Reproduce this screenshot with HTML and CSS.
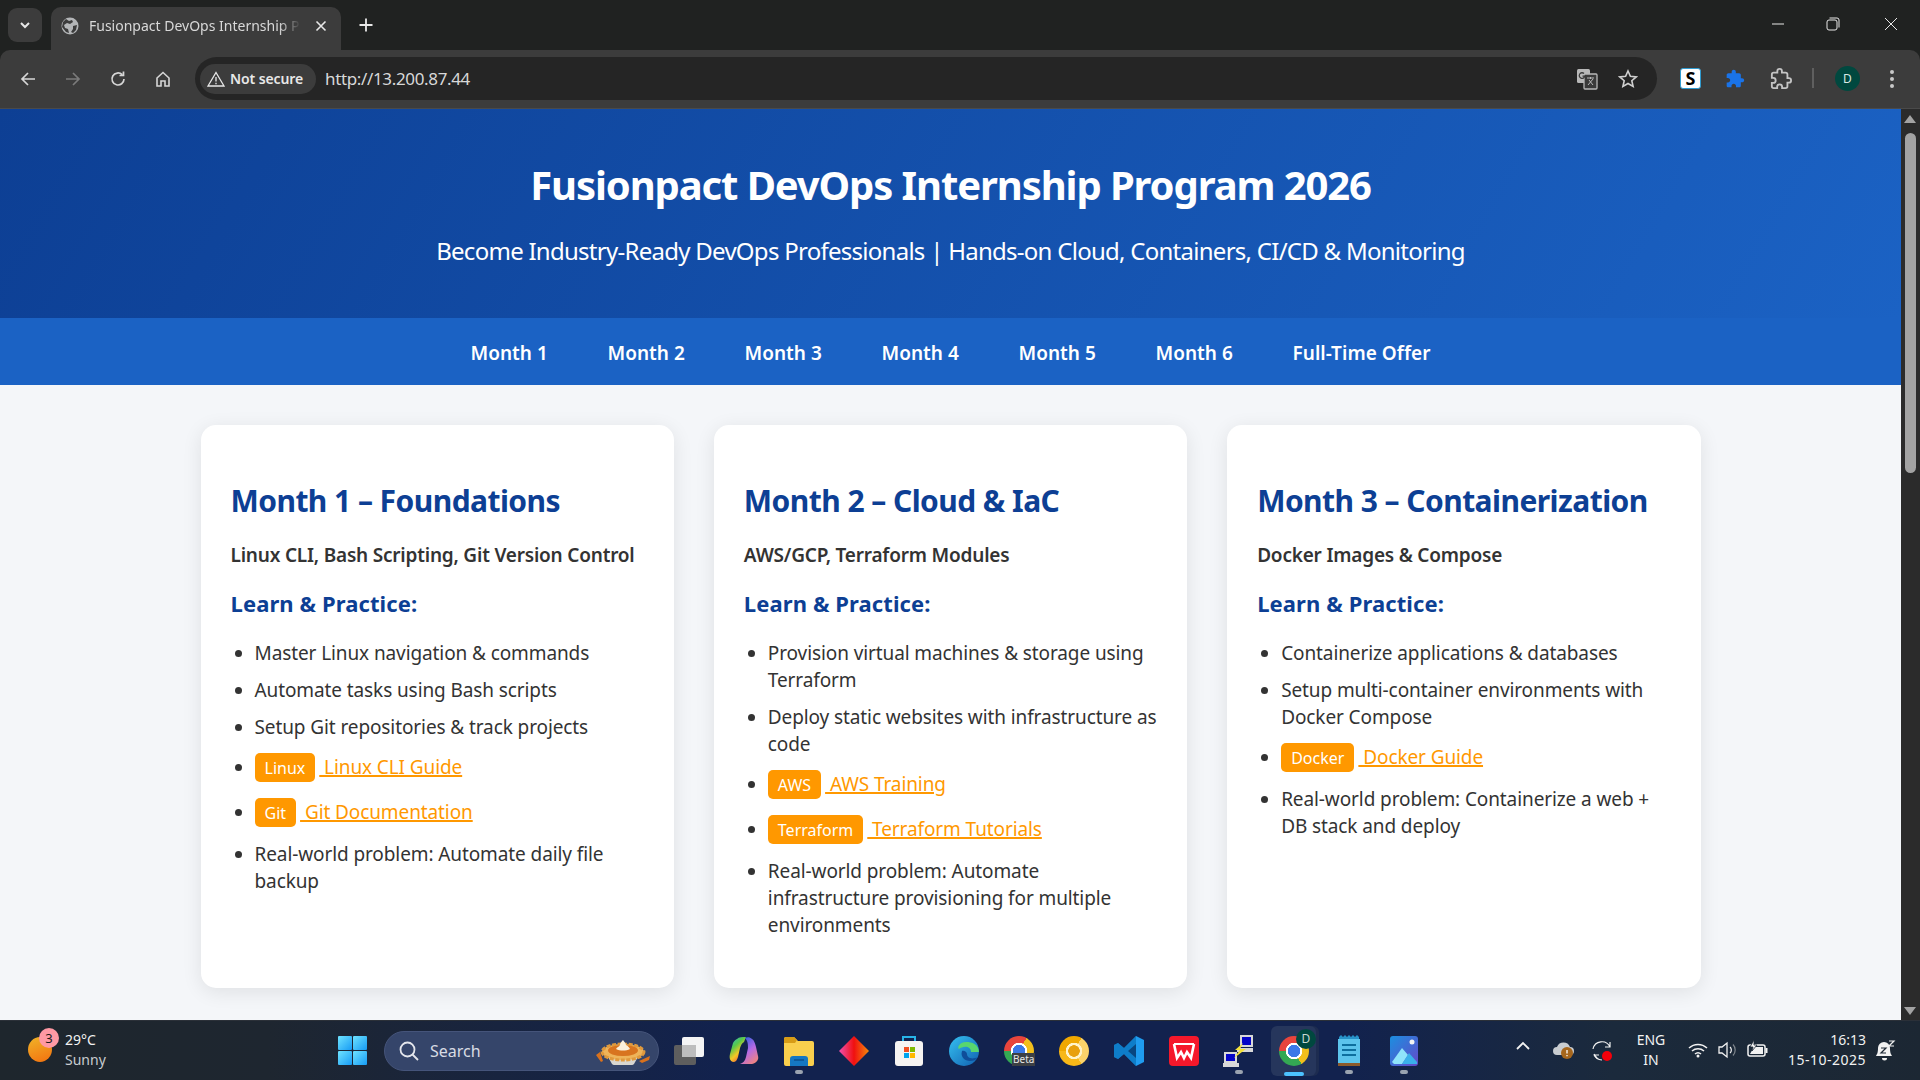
FILE: index.html
```html
<!DOCTYPE html>
<html lang="en">
<head>
    <meta charset="UTF-8">
    <meta name="viewport" content="width=device-width, initial-scale=1.0">
    <title>Fusionpact DevOps Internship Program 2026</title>
    <link rel="stylesheet" href="styles.css">
</head>
<body>
    <!-- Browser tab strip -->
    <div class="tabstrip">
        <div class="tab-search">
            <svg width="12" height="12" viewBox="0 0 12 12"><path d="M2 4l4 4 4-4" fill="none" stroke="#e8e8e8" stroke-width="2"/></svg>
        </div>
        <div class="tab">
            <svg class="tab-globe" width="18" height="18" viewBox="0 0 18 18"><circle cx="9" cy="9" r="8.500" fill="#b4b6b8"/><path d="M5 2l3 2 3-1 1 2-3 2-3-1-3 2 1 3 3 1 1 4-3-1-4-5 1-5zM12 9l4-1-1 5-3 3-2-1 2-3z" fill="#3c3c3c"/></svg>
            <span class="tab-title">Fusionpact DevOps Internship P</span>
            <svg width="12" height="12" viewBox="0 0 12 12"><path d="M1.500 1.500l9 9M10.500 1.500l-9 9" stroke="#e8e8e8" stroke-width="1.600"/></svg>
        </div>
        <svg class="tab-new" width="16" height="16" viewBox="0 0 16 16"><path d="M8 1.500v13M1.500 8h13" stroke="#e8e8e8" stroke-width="1.800"/></svg>
        <div class="win-controls">
            <svg width="14" height="14" viewBox="0 0 14 14"><path d="M1 7h12" stroke="#e8e8e8" stroke-width="1"/></svg>
            <svg width="14" height="14" viewBox="0 0 14 14"><rect x="1" y="3" width="10" height="10" rx="2" fill="none" stroke="#e8e8e8"/><path d="M3.500 1h7.500a2 2 0 0 1 2 2v7.500" fill="none" stroke="#e8e8e8"/></svg>
            <svg width="14" height="14" viewBox="0 0 14 14"><path d="M1 1l12 12M13 1L1 13" stroke="#e8e8e8" stroke-width="1"/></svg>
        </div>
    </div>

    <!-- Browser toolbar -->
    <div class="toolbar">
        <div class="nav-buttons">
            <svg width="18" height="18" viewBox="0 0 18 18"><path d="M16 9H3M9 3L3 9l6 6" fill="none" stroke="#d6d6d6" stroke-width="1.700"/></svg>
            <svg width="18" height="18" viewBox="0 0 18 18"><path d="M2 9h13M9 3l6 6-6 6" fill="none" stroke="#7b7b7b" stroke-width="1.700"/></svg>
            <svg width="18" height="18" viewBox="0 0 18 18"><path d="M15 9a6 6 0 1 1-1.800-4.300M14.500 1.500v4h-4" fill="none" stroke="#d6d6d6" stroke-width="1.700"/></svg>
            <svg width="18" height="18" viewBox="0 0 18 18"><path d="M3 8l6-5.500L15 8v8h-4v-5H7v5H3z" fill="none" stroke="#d6d6d6" stroke-width="1.600"/></svg>
        </div>
        <div class="omnibox">
            <div class="not-secure">
                <svg width="18" height="16" viewBox="0 0 18 16"><path d="M9 1.500L17 15H1zM9 6v4.500M9 11.700v1.500" fill="none" stroke="#e8e8e8" stroke-width="1.300"/></svg>
                <span>Not secure</span>
            </div>
            <span class="url">http://13.200.87.44</span>
            <svg class="omni-translate" width="22" height="22" viewBox="0 0 22 22"><rect x="1" y="1" width="13" height="14" rx="1.500" fill="#b8b8b8"/><rect x="8" y="6" width="13" height="15" rx="1" fill="#3a3a3a" stroke="#b8b8b8" stroke-width="1.300"/><path d="M11 10h7M14.500 9v2M12 17l5-6M13 12l4 5" stroke="#b8b8b8" fill="none"/><path d="M8 5.500a2.800 2.800 0 1 0 .8 2.700H6.500" fill="none" stroke="#3a3a3a" stroke-width="1.300"/></svg>
            <svg class="omni-star" width="20" height="20" viewBox="0 0 20 20"><path d="M10 2l2.400 5.300 5.800.6-4.400 3.800 1.300 5.700L10 14.500l-5.100 2.900 1.300-5.700L1.800 7.900l5.800-.6z" fill="none" stroke="#d0d0d0" stroke-width="1.600"/></svg>
        </div>
        <div class="ext-buttons">
            <div class="ext-s">S</div>
            <svg class="ext-blue" width="20" height="20" viewBox="0 0 24 24"><path d="M20.500 11H19V7c0-1.100-.9-2-2-2h-4V3.500C13 2.120 11.880 1 10.500 1S8 2.120 8 3.500V5H4c-1.100 0-1.990.9-1.990 2v3.800H3.500c1.490 0 2.700 1.210 2.700 2.700s-1.210 2.700-2.700 2.700H2V20c0 1.100.9 2 2 2h3.800v-1.500c0-1.490 1.210-2.700 2.700-2.700 1.490 0 2.700 1.210 2.700 2.700V22H17c1.100 0 2-.9 2-2v-4h1.500c1.380 0 2.500-1.120 2.500-2.500S21.880 11 20.500 11z" fill="#1a73e8"/></svg>
            <svg class="ext-puzzle" width="22" height="22" viewBox="0 0 24 24"><path d="M20.500 11H19V7c0-1.100-.9-2-2-2h-4V3.500C13 2.120 11.880 1 10.500 1S8 2.120 8 3.500V5H4c-1.100 0-1.990.9-1.990 2v3.800H3.500c1.490 0 2.700 1.210 2.700 2.700s-1.210 2.700-2.700 2.700H2V20c0 1.100.9 2 2 2h3.800v-1.500c0-1.490 1.210-2.700 2.700-2.700 1.490 0 2.700 1.210 2.700 2.700V22H17c1.100 0 2-.9 2-2v-4h1.500c1.380 0 2.500-1.120 2.500-2.500S21.880 11 20.500 11z" fill="none" stroke="#c4c4c4" stroke-width="2"/></svg>
            <div class="ext-sep"></div>
            <div class="avatar">D</div>
            <svg class="kebab" width="6" height="20" viewBox="0 0 6 20"><circle cx="3" cy="3" r="2" fill="#c8c8c8"/><circle cx="3" cy="10" r="2" fill="#c8c8c8"/><circle cx="3" cy="17" r="2" fill="#c8c8c8"/></svg>
        </div>
    </div>

    <!-- Page viewport -->
    <div class="viewport">
        <div class="page">
            <header class="hero">
                <h1>Fusionpact DevOps Internship Program 2026</h1>
                <p>Become Industry-Ready DevOps Professionals | Hands-on Cloud, Containers, CI/CD &amp; Monitoring</p>
            </header>
            <nav class="month-nav">
                <a href="#m1">Month 1</a>
                <a href="#m2">Month 2</a>
                <a href="#m3">Month 3</a>
                <a href="#m4">Month 4</a>
                <a href="#m5">Month 5</a>
                <a href="#m6">Month 6</a>
                <a href="#offer">Full-Time Offer</a>
            </nav>
            <main class="cards">
                <section class="card" id="m1">
                    <h2>Month 1 – Foundations</h2>
                    <p class="topics">Linux CLI, Bash Scripting, Git Version Control</p>
                    <h3>Learn &amp; Practice:</h3>
                    <ul>
                        <li>Master Linux navigation &amp; commands</li>
                        <li>Automate tasks using Bash scripts</li>
                        <li>Setup Git repositories &amp; track projects</li>
                        <li class="res"><span class="badge">Linux</span><a href="#">&nbsp;Linux CLI Guide</a></li>
                        <li class="res"><span class="badge">Git</span><a href="#">&nbsp;Git Documentation</a></li>
                        <li>Real-world problem: Automate daily file backup</li>
                    </ul>
                </section>
                <section class="card" id="m2">
                    <h2>Month 2 – Cloud &amp; IaC</h2>
                    <p class="topics">AWS/GCP, Terraform Modules</p>
                    <h3>Learn &amp; Practice:</h3>
                    <ul>
                        <li>Provision virtual machines &amp; storage using Terraform</li>
                        <li>Deploy static websites with infrastructure as code</li>
                        <li class="res"><span class="badge">AWS</span><a href="#">&nbsp;AWS Training</a></li>
                        <li class="res"><span class="badge">Terraform</span><a href="#">&nbsp;Terraform Tutorials</a></li>
                        <li>Real-world problem: Automate infrastructure provisioning for multiple environments</li>
                    </ul>
                </section>
                <section class="card" id="m3">
                    <h2>Month 3 – Containerization</h2>
                    <p class="topics">Docker Images &amp; Compose</p>
                    <h3>Learn &amp; Practice:</h3>
                    <ul>
                        <li>Containerize applications &amp; databases</li>
                        <li>Setup multi-container environments with Docker Compose</li>
                        <li class="res"><span class="badge">Docker</span><a href="#">&nbsp;Docker Guide</a></li>
                        <li>Real-world problem: Containerize a web + DB stack and deploy</li>
                    </ul>
                </section>
            </main>
        </div>
        <div class="scrollbar">
            <div class="scroll-arrow up"></div>
            <div class="scroll-thumb"></div>
            <div class="scroll-arrow down"></div>
        </div>
    </div>

    <!-- Windows taskbar -->
    <footer class="taskbar">
        <div class="weather">
            <div class="sun"></div>
            <div class="weather-badge">3</div>
            <div class="weather-text">
                <span>29°C</span>
                <span class="dim">Sunny</span>
            </div>
        </div>
        <div class="start">
            <i></i><i></i><i></i><i></i>
        </div>
        <div class="search">
            <svg width="22" height="22" viewBox="0 0 22 22"><circle cx="9.500" cy="9.500" r="7" fill="none" stroke="#e4e6ec" stroke-width="1.800"/><path d="M14.500 14.500L20 20" stroke="#e4e6ec" stroke-width="1.800"/></svg>
            <span>Search</span>
            <svg class="pie" width="60" height="28" viewBox="0 0 60 28"><path d="M3 17l5 7 2-1-3-9zM57 18l-11 5 3 2 7-3z" fill="#d9711c"/><path d="M14 17h32l-5 9a4 4 0 0 1-2 1H21a4 4 0 0 1-2-1z" fill="#d8d6d0"/><ellipse cx="30" cy="14" rx="21" ry="8" fill="#eeb45a" stroke="#e0993c" stroke-width="3" stroke-dasharray="4 1.500"/><ellipse cx="30" cy="12.500" rx="15" ry="5.500" fill="#d8741f"/><path d="M23 11c1-2 3-2 4-4 0-2 2-4 3-5 1 2 3 3 3 5 2 1 3 2 4 4-4 2-10 2-14 0z" fill="#fbf1dc"/></svg>
        </div>
        <div class="task-icons">
            <div class="tile"><svg width="32" height="30" viewBox="0 0 32 30"><rect x="1" y="9" width="22" height="20" rx="2" fill="#5e5e5e"/><rect x="9" y="1" width="22" height="20" rx="2" fill="#f4f4f4"/><rect x="9" y="9" width="14" height="12" fill="#bdbdbd"/></svg></div>
            <div class="tile"><svg width="30" height="28" viewBox="0 0 30 28"><defs><linearGradient id="cop1" x1="0" y1="0" x2=".6" y2="1"><stop offset="0" stop-color="#27b6e0"/><stop offset=".4" stop-color="#58c84a"/><stop offset=".7" stop-color="#f5c824"/><stop offset="1" stop-color="#f0583c"/></linearGradient><linearGradient id="cop2" x1=".2" y1="0" x2=".8" y2="1"><stop offset="0" stop-color="#2a5fe0"/><stop offset=".5" stop-color="#b46ae6"/><stop offset="1" stop-color="#f2857a"/></linearGradient></defs><path d="M8 2c2-2 5-2 9-2l-2 5c-2 1-3 3-4 6l-2 9c-1 3-2 5-5 5-3-1-4-4-3-8l3-11c1-2 2-3 4-4z" fill="url(#cop1)"/><path d="M16 1c2-1 5-1 7 1 2 1 3 4 4 8l2 9c1 3-1 7-6 8H11c3-1 5-3 6-7l2-9c0-3 0-7-3-10z" fill="url(#cop2)"/></svg></div>
            <div class="tile has-dot"><svg width="30" height="30" viewBox="0 0 30 30"><path d="M0 3a2 2 0 0 1 2-2h8l4 4h14a2 2 0 0 1 2 2v21a2 2 0 0 1-2 2H2a2 2 0 0 1-2-2z" fill="#f9cf4d"/><path d="M0 3a2 2 0 0 1 2-2h8l3 3 -2 3H0z" fill="#d79c16"/><path d="M6 23a3 3 0 0 1 3-3h12a3 3 0 0 1 3 3v7H6z" fill="#1577c2"/><path d="M10 24h10" stroke="#0c4f8c" stroke-width="1.500"/></svg></div>
            <div class="tile"><svg width="30" height="30" viewBox="0 0 30 30"><defs><linearGradient id="dia" x1="0" y1="0" x2="1" y2="0"><stop offset="0" stop-color="#f050b0"/><stop offset=".5" stop-color="#f01010"/><stop offset="1" stop-color="#f58a0a"/></linearGradient></defs><path d="M15 0l15 15-15 15L0 15z" fill="url(#dia)"/></svg></div>
            <div class="tile"><svg width="30" height="32" viewBox="0 0 30 32"><path d="M9 6V2h12v4" fill="none" stroke="#27b4e8" stroke-width="2"/><rect x="1" y="6" width="28" height="25" rx="3" fill="#f6f4f2"/><rect x="10" y="12" width="5" height="5" fill="#f25022"/><rect x="16" y="12" width="5" height="5" fill="#7fba00"/><rect x="10" y="18" width="5" height="5" fill="#00a4ef"/><rect x="16" y="18" width="5" height="5" fill="#ffb900"/></svg></div>
            <div class="tile"><svg width="30" height="30" viewBox="0 0 30 30"><defs><linearGradient id="edge" x1="0" y1="0" x2="1" y2="1"><stop offset="0" stop-color="#35c1f1"/><stop offset="1" stop-color="#1160b0"/></linearGradient></defs><circle cx="15" cy="15" r="15" fill="url(#edge)"/><path d="M30 17C30 8 23 6 17 6 10 6 8 12 10 13c3-3 12-4 12 3h8z" fill="#58d66f"/><path d="M13 15c-2 6 3 10 8 10 3 0 6-1 8-4-6 3-11 1-11-3 0-2-3-4-5-3z" fill="#0f4e9a"/></svg></div>
            <div class="tile"><div class="chrome small"></div><span class="beta">Beta</span></div>
            <div class="tile"><div class="canary"></div></div>
            <div class="tile"><svg width="30" height="30" viewBox="0 0 30 30"><path d="M22 0l8 4v22l-8 4-12-12-6 5-4-2V9l4-2 6 5zM22 8l-8 7 8 7z" fill="#1f9cf0" fill-rule="evenodd"/><path d="M22 0l-12 12-6-5-4 2v12l4 2 6-5 12 12z" fill="#0065a9" opacity=".55"/></svg></div>
            <div class="tile"><svg width="30" height="30" viewBox="0 0 30 30"><rect width="30" height="30" rx="4" fill="#f5182b"/><path d="M5 8l3 14 4-6 3 6 3-6 4 6 3-14" fill="none" stroke="#fff" stroke-width="2.600"/><path d="M5 8h20" stroke="#fff" stroke-width="2"/></svg></div>
            <div class="tile has-dot"><svg width="32" height="34" viewBox="0 0 32 34"><rect x="17" y="1" width="13" height="12" fill="#d8d8d8"/><rect x="19" y="3" width="9" height="8" fill="#0505c8"/><rect x="14" y="14" width="16" height="4" fill="#d8d8d8"/><rect x="1" y="18" width="13" height="11" fill="#d8d8d8"/><rect x="3" y="20" width="9" height="7" fill="#0505c8"/><rect x="0" y="29" width="16" height="4" fill="#d8d8d8"/><path d="M20 9l-8 7h5l-6 8 12-9h-6z" fill="#f5e23a"/></svg></div>
            <div class="tile active has-bar"><div class="chrome"></div><div class="chrome-badge">D</div></div>
            <div class="tile has-dot"><svg width="24" height="32" viewBox="0 0 24 32"><path d="M2 2l2-2 2 2 2-2 2 2 2-2 2 2 2-2 2 2 2-2 2 2v3H2z" fill="#2793c9"/><rect x="1" y="4" width="22" height="24" fill="#5cc4ec"/><path d="M5 10h14M5 15h14M5 20h14" stroke="#0e6f9e" stroke-width="2.200"/><rect x="1" y="28" width="22" height="3" fill="#8c5a2c"/></svg></div>
            <div class="tile has-dot"><svg width="28" height="30" viewBox="0 0 28 30"><defs><linearGradient id="photo" x1="0" y1="0" x2="1" y2="1"><stop offset="0" stop-color="#1b8fe0"/><stop offset="1" stop-color="#6548c8"/></linearGradient></defs><rect width="28" height="30" rx="3" fill="url(#photo)"/><circle cx="22" cy="6" r="2.500" fill="#f2f2f2"/><path d="M2 26l10-14 6 7-6 9H4z" fill="#8fe4fb"/><path d="M12 28l7-11 8 9v2z" fill="#3ab0ea"/></svg></div>
        </div>
        <div class="tray">
            <svg class="tray-chevron" width="16" height="10" viewBox="0 0 16 10"><path d="M2 8l6-6 6 6" fill="none" stroke="#f2f2f2" stroke-width="1.800"/></svg>
            <svg class="tray-cloud" width="22" height="20" viewBox="0 0 22 20"><path d="M5 15a4 4 0 0 1 0-8 7 7 0 0 1 13 0 4 4 0 0 1 0 8z" fill="#c8ccd0"/><circle cx="15" cy="13" r="6" fill="#a6661c"/><path d="M15 10v3.500M15 15v1.300" stroke="#fff" stroke-width="1.300"/></svg>
            <svg class="tray-sync" width="22" height="22" viewBox="0 0 22 22"><path d="M1 9a9 9 0 0 1 17-2M18 2v5h-5M2 15l3 3M2 15h5" fill="none" stroke="#f2f2f2" stroke-width="1.200"/><path d="M2 14a9 9 0 0 0 8 6" fill="none" stroke="#f2f2f2" stroke-width="1.200"/><circle cx="15" cy="16" r="5" fill="#f5000a"/></svg>
            <div class="tray-lang"><span>ENG</span><span>IN</span></div>
            <svg class="tray-wifi" width="20" height="16" viewBox="0 0 20 16"><path d="M1 6a13 13 0 0 1 18 0M4 9a9 9 0 0 1 12 0M7 12a4.500 4.500 0 0 1 6 0" fill="none" stroke="#f2f2f2" stroke-width="1.500"/><circle cx="10" cy="14" r="1.500" fill="#f2f2f2"/></svg>
            <svg class="tray-vol" width="20" height="18" viewBox="0 0 20 18"><path d="M1 6h3l5-4v14l-5-4H1z" fill="none" stroke="#f2f2f2" stroke-width="1.300"/><path d="M12 6a4 4 0 0 1 0 6" fill="none" stroke="#f2f2f2" stroke-width="1.200"/><path d="M15 3.500a8 8 0 0 1 0 11" fill="none" stroke="#7e858c" stroke-width="1.200"/></svg>
            <svg class="tray-batt" width="22" height="18" viewBox="0 0 22 18"><rect x="1" y="5" width="17" height="11" rx="2" fill="none" stroke="#f2f2f2" stroke-width="1.500"/><rect x="18.500" y="8" width="2" height="5" fill="#f2f2f2"/><path d="M3 14l4-7h9v7z" fill="#f2f2f2"/><path d="M7 0L3 7h3l-1 4 5-6H7z" fill="#f2f2f2" stroke="#1c2733" stroke-width=".8"/></svg>
            <div class="tray-clock"><span>16:13</span><span class="tray-date">15-10-2025</span></div>
            <svg class="tray-bell" width="20" height="22" viewBox="0 0 20 22"><path d="M8 2a6 6 0 0 0-6 6c0 5-1 6-2 8h16c-1-2-2-3-2-8a6 6 0 0 0-6-6z" fill="#f2f2f2"/><path d="M6 18a2.500 2.500 0 0 0 5 0z" fill="#f2f2f2"/><path d="M5 8h5l-5 5h5" fill="none" stroke="#1c2733" stroke-width="1.200"/><path d="M13 1h5l-5 5h5" fill="none" stroke="#f2f2f2" stroke-width="1.200"/></svg>
        </div>
    </footer>
</body>
</html>
```

FILE: styles.css
```css
* {
    margin: 0;
    padding: 0;
    box-sizing: border-box;
}

html, body {
    height: 100%;
    overflow: hidden;
}

body {
    display: flex;
    flex-direction: column;
    font-family: 'Noto Sans', 'Open Sans', sans-serif;
    background: #202221;
}

/* browser chrome */
.tabstrip {
    height: 50px;
    flex: none;
    display: flex;
    align-items: flex-end;
    background: #202221;
    position: relative;
}

.tab-search {
    width: 34px;
    height: 34px;
    margin: 0 9px 8px 8px;
    display: flex;
    align-items: center;
    justify-content: center;
    background: #3c3c3c;
    border-radius: 9px;
}

.tab {
    width: 290px;
    height: 43px;
    padding: 0 14px 6px 10px;
    display: flex;
    align-items: center;
    gap: 10px;
    background: #3c3c3c;
    border-radius: 10px 10px 0 0;
}

.tab-globe {
    flex: none;
}

.tab-title {
    flex: 1;
    min-width: 0;
    font-size: 14px;
    color: #d8d8d8;
    white-space: nowrap;
    -webkit-mask-image: linear-gradient(90deg, #000 88%, transparent 98%);
    mask-image: linear-gradient(90deg, #000 88%, transparent 98%);
}

.tab-new {
    margin: 0 0 17px 17px;
}

.win-controls {
    position: absolute;
    top: 17px;
    right: 22px;
    display: flex;
    gap: 44px;
}

.win-controls svg {
    display: block;
}

.win-controls svg:first-child {
    margin-right: -3px;
}

.toolbar {
    height: 59px;
    flex: none;
    display: flex;
    align-items: center;
    padding: 0 0 1px 0;
    background: #3c3c3c;
    border-radius: 10px 10px 0 0;
    border-bottom: 1px solid #4a4a4a;
}

.nav-buttons {
    width: 195px;
    flex: none;
    padding-left: 19px;
    display: flex;
    gap: 27px;
}

.omnibox {
    width: 1462px;
    height: 43px;
    flex: none;
    padding: 0 19px 0 5px;
    display: flex;
    align-items: center;
    background: #252525;
    border-radius: 22px;
}

.not-secure {
    width: 116px;
    height: 30px;
    padding: 0 0 0 7px;
    display: flex;
    align-items: center;
    gap: 5px;
    background: #3c3c3c;
    border-radius: 15px;
    font-size: 14px;
    font-weight: 600;
    letter-spacing: -0.1px;
    color: #e8e8e8;
}

.url {
    flex: 1;
    margin-left: 9px;
    font-size: 17px;
    letter-spacing: -0.35px;
    color: #d8d8d8;
}

.omni-translate {
    margin-right: 20px;
}

.ext-buttons {
    flex: 1;
    display: flex;
    align-items: center;
    position: relative;
    height: 40px;
}

.ext-s {
    position: absolute;
    left: 23px;
    top: 9px;
    width: 21px;
    height: 21px;
    background: #fff;
    border: 1px solid #2f9bd0;
    border-radius: 3px;
    font: 700 18px/19px 'Noto Sans', sans-serif;
    color: #000;
    text-align: center;
}

.ext-blue {
    position: absolute;
    left: 68px;
    top: 10px;
}

.ext-puzzle {
    position: absolute;
    left: 113px;
    top: 9px;
}

.ext-sep {
    position: absolute;
    left: 155px;
    top: 9px;
    width: 2px;
    height: 20px;
    background: #5f5f5f;
}

.avatar {
    position: absolute;
    left: 178px;
    top: 7px;
    width: 25px;
    height: 25px;
    border-radius: 50%;
    background: #00483f;
    color: #d8e8e4;
    font-size: 12px;
    line-height: 25px;
    text-align: center;
}

.kebab {
    position: absolute;
    left: 232px;
    top: 10px;
}

/* page */
.viewport {
    flex: 1;
    display: flex;
    min-height: 0;
}

.page {
    flex: 1;
    min-width: 0;
    background: #f4f6f9;
    overflow: hidden;
}

.hero {
    height: 209px;
    padding-top: 49px;
    background: linear-gradient(120deg, #0d3f94, #1b62c4);
    color: #fff;
    text-align: center;
}

.hero h1 {
    font-size: 40px;
    line-height: 54px;
    font-weight: 700;
    letter-spacing: -1.1px;
}

.hero p {
    margin-top: 23px;
    font-size: 24px;
    line-height: 32px;
    letter-spacing: -0.73px;
}

.month-nav {
    height: 67px;
    padding-top: 2px;
    display: flex;
    justify-content: center;
    align-items: center;
    gap: 59.500px;
    background: #1b62c4;
}

.month-nav a {
    color: #fff;
    font-size: 19px;
    font-weight: 600;
    letter-spacing: 0.05px;
    text-decoration: none;
}

.cards {
    max-width: 1500px;
    height: 563px;
    margin: 40px auto 0;
    display: grid;
    grid-template-columns: repeat(3, 1fr);
    gap: 40px;
}

.card {
    padding: 54px 30px 0;
    background: #fff;
    border-radius: 15px;
    box-shadow: 0 4px 20px rgba(0, 0, 0, 0.09);
    color: #333;
}

.card h2 {
    font-size: 30px;
    line-height: 44px;
    font-weight: 700;
    letter-spacing: -0.55px;
    color: #0d3f94;
}

.topics {
    margin-top: 19px;
    font-size: 19px;
    line-height: 27px;
    font-weight: 600;
    letter-spacing: -0.2px;
}

.card h3 {
    margin-top: 19px;
    font-size: 22px;
    line-height: 30px;
    font-weight: 700;
    letter-spacing: 0.1px;
    color: #0d3f94;
}

.card ul {
    margin-top: 22px;
    padding-left: 24px;
}

.card li {
    margin-bottom: 10px;
    font-size: 19px;
    line-height: 27px;
    letter-spacing: -0.1px;
}

.card li.res {
    margin-bottom: 11px;
}

.badge {
    display: inline-block;
    margin: 2px 4px 3px 0;
    padding: 2px 10px 0;
    background: #ff9800;
    border-radius: 5px;
    color: #fff;
    font-size: 16px;
    line-height: 27px;
    letter-spacing: 0;
}

.card li a {
    color: #ff9800;
    text-decoration-thickness: 2px;
}

/* scrollbar */
.scrollbar {
    width: 19px;
    flex: none;
    position: relative;
    background: #2b2b2b;
}

.scroll-arrow {
    position: absolute;
    left: 3px;
    width: 0;
    height: 0;
    border-left: 6.500px solid transparent;
    border-right: 6.500px solid transparent;
}

.scroll-arrow.up {
    top: 6px;
    border-bottom: 8px solid #a3a3a3;
}

.scroll-arrow.down {
    bottom: 5px;
    border-top: 8px solid #a3a3a3;
}

.scroll-thumb {
    position: absolute;
    top: 24px;
    left: 4px;
    width: 11px;
    height: 340px;
    background: #a3a3a3;
    border-radius: 6px;
}

/* taskbar */
.taskbar {
    height: 60px;
    flex: none;
    position: relative;
    display: flex;
    align-items: center;
    border-top: 1px solid #2b3038;
    background: linear-gradient(90deg, #1e262d 0, #1e2630 14%, #12224e 38%, #12224e 70%, #1b2a3c 84%, #1c2733 100%);
    color: #f2f2f2;
}

.weather {
    width: 338px;
    flex: none;
    position: relative;
    height: 100%;
}

.sun {
    position: absolute;
    left: 28px;
    top: 16px;
    width: 24px;
    height: 25px;
    border-radius: 50%;
    background: linear-gradient(160deg, #f0b428, #f2700f);
}

.weather-badge {
    position: absolute;
    left: 39px;
    top: 7px;
    width: 20px;
    height: 20px;
    border-radius: 50%;
    background: #ff99a4;
    color: #1a1a1a;
    font-size: 13px;
    line-height: 20px;
    text-align: center;
}

.weather-text {
    position: absolute;
    left: 65px;
    top: 9px;
    display: flex;
    flex-direction: column;
    font-size: 14px;
    line-height: 20px;
}

.dim {
    color: #c8ccd0;
}

.start {
    width: 29px;
    height: 29px;
    flex: none;
    display: grid;
    grid-template-columns: 1fr 1fr;
    gap: 1px;
}

.start i {
    background: linear-gradient(135deg, #6fe3ff, #169bf5);
    border-radius: 1px;
}

.search {
    width: 275px;
    height: 40px;
    flex: none;
    margin-left: 17px;
    padding-left: 13px;
    position: relative;
    display: flex;
    align-items: center;
    gap: 10px;
    background: #35456a;
    border: 1px solid #45547a;
    border-radius: 20px;
    color: #d8dce4;
    font-size: 16px;
}

.pie {
    position: absolute;
    right: 5px;
    top: 6px;
}

.task-icons {
    flex: none;
    margin-left: 2px;
    display: flex;
    align-items: center;
    height: 100%;
}

.tile {
    width: 55px;
    height: 50px;
    position: relative;
    display: flex;
    align-items: center;
    justify-content: center;
    border-radius: 6px;
}

.tile.active {
    background: #26365c;
    margin: 0 5px;
    width: 45px;
    box-shadow: 3px 0 0 #1d2c50;
}

.has-dot::after {
    content: '';
    position: absolute;
    left: 50%;
    bottom: 2px;
    width: 8px;
    height: 4px;
    margin-left: -4px;
    border-radius: 2px;
    background: #9aa3b0;
}

.has-bar::after {
    content: '';
    position: absolute;
    left: 50%;
    bottom: 0;
    width: 20px;
    height: 4px;
    margin-left: -10px;
    border-radius: 2px;
    background: #4cc2ff;
}

.chrome {
    width: 30px;
    height: 30px;
    border-radius: 50%;
    background:
        radial-gradient(circle, #3b78e7 0 6px, #fff 6.500px 8px, transparent 8.500px),
        conic-gradient(from 30deg, #f2bf1c 0 120deg, #34a853 120deg 240deg, #e8453c 240deg 360deg);
}

.chrome-badge {
    position: absolute;
    right: 0;
    top: 3px;
    width: 20px;
    height: 20px;
    border-radius: 50%;
    background: #00483f;
    color: #c8d8d4;
    font-size: 12px;
    line-height: 20px;
    text-align: center;
}

.beta {
    position: absolute;
    left: 21px;
    top: 27px;
    padding: 0 1px;
    background: #3c3f44;
    color: #e8e8e8;
    font-size: 10px;
    line-height: 13px;
}

.canary {
    width: 30px;
    height: 30px;
    border-radius: 50%;
    background:
        radial-gradient(circle, #e8a00c 0 5.500px, #fff3c8 6px 8px, transparent 8.500px),
        conic-gradient(from 30deg, #fbd36a 0 120deg, #f8b818 120deg 240deg, #f0a800 240deg 360deg);
}

.tray {
    position: absolute;
    inset: 0;
    pointer-events: none;
}

.tray svg,
.tray-lang,
.tray-clock {
    position: absolute;
}

.tray-chevron {
    left: 1515px;
    top: 20px;
}

.tray-cloud {
    left: 1552px;
    top: 19px;
}

.tray-sync {
    left: 1592px;
    top: 19px;
}

.tray-lang {
    left: 1631px;
    width: 40px;
    top: 9px;
    display: flex;
    flex-direction: column;
    align-items: center;
    font-size: 14px;
    line-height: 20px;
}

.tray-wifi {
    left: 1688px;
    top: 21px;
}

.tray-vol {
    left: 1718px;
    top: 20px;
}

.tray-batt {
    left: 1747px;
    top: 19px;
}

.tray-clock {
    right: 54px;
    top: 9px;
    display: flex;
    flex-direction: column;
    align-items: flex-end;
    font-size: 14px;
    line-height: 20px;
}

.tray-date {
    letter-spacing: 0.5px;
}

.tray-bell {
    left: 1876px;
    top: 19px;
}
```
